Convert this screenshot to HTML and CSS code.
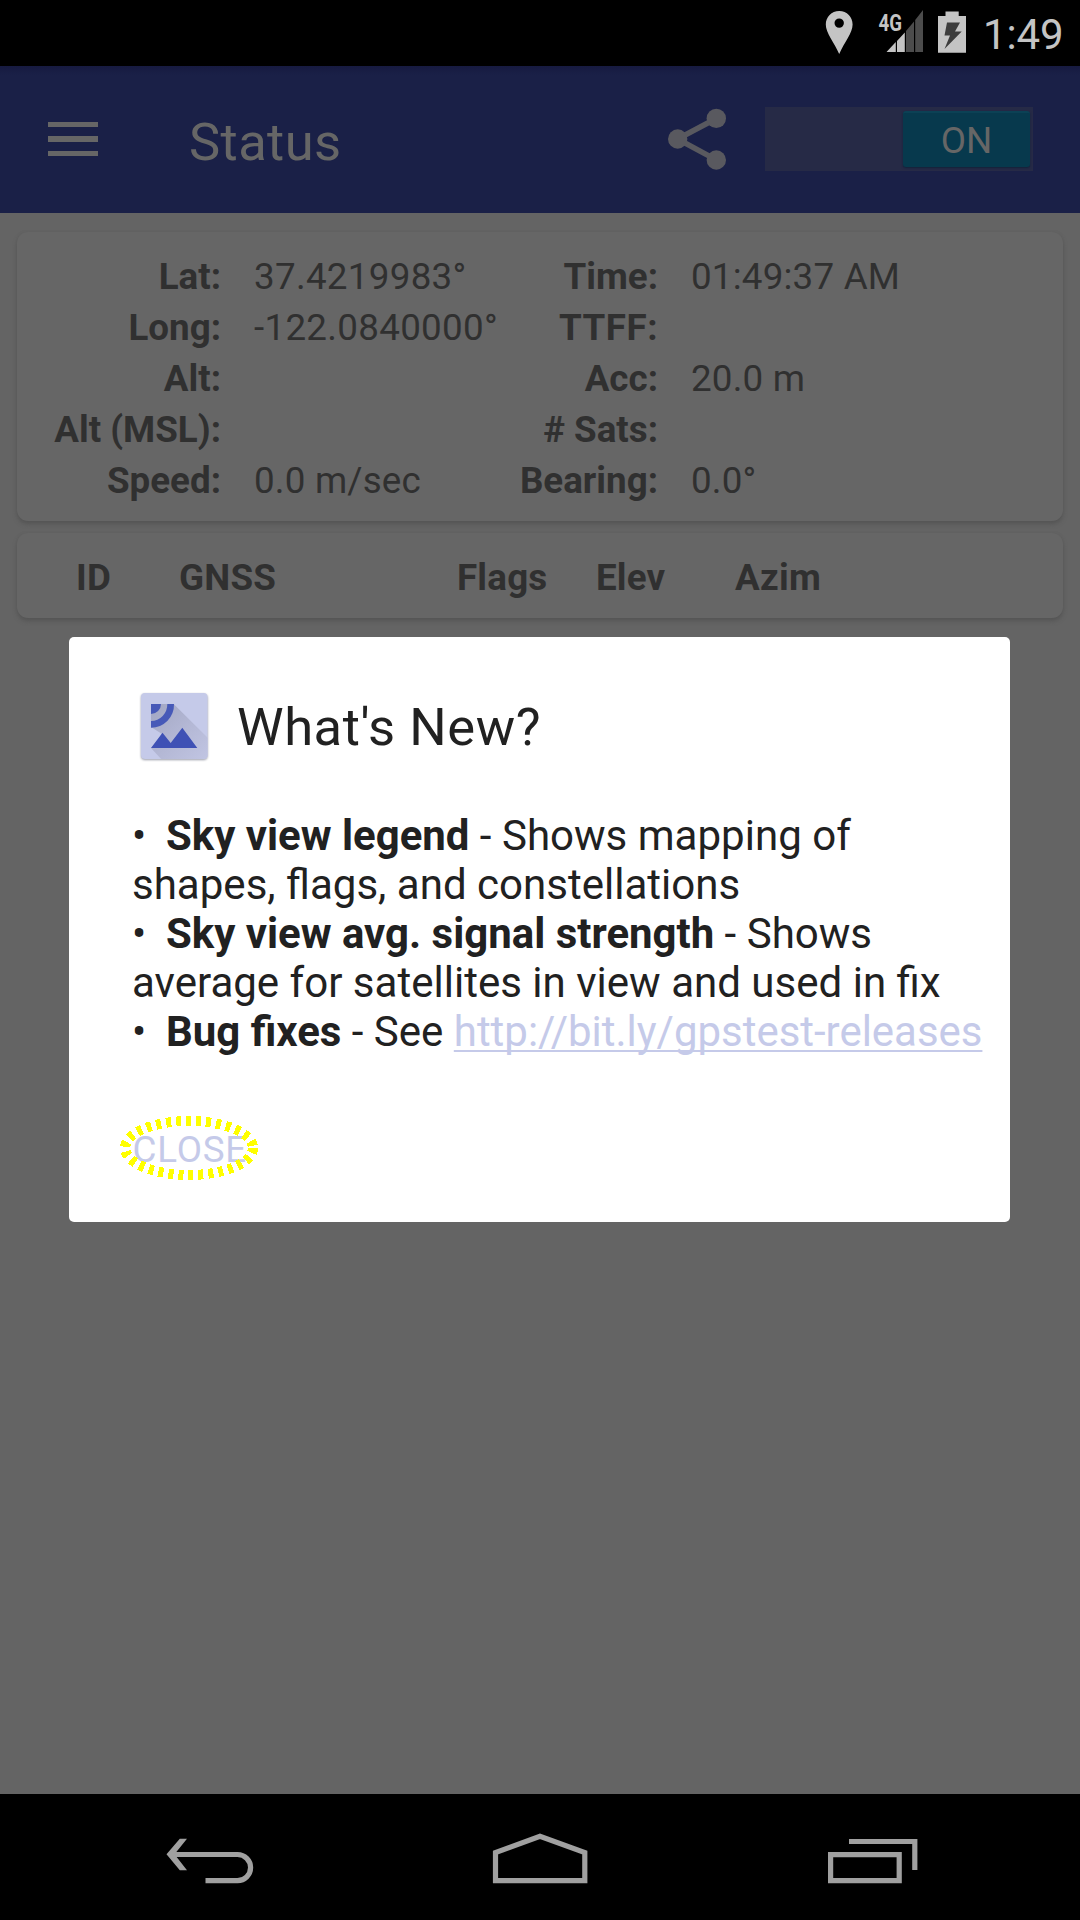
FILE: index.html
```html
<!DOCTYPE html>
<html lang="en">
<head>
<meta charset="utf-8">
<title>GPSTest</title>
<link rel="stylesheet" href="styles.css">
</head>
<body>
<div class="screen">
  <div class="statusbar">
    <svg class="status-icons" width="170" height="66" viewBox="810 0 170 66">
      <path fill="#c4c4c4" fill-rule="evenodd" d="M839.2 11C831.5 11 825.8 17 825.8 24.5C825.8 33 834 42 839.2 54C844.4 42 852.6 33 852.6 24.5C852.6 17 847 11 839.2 11ZM839.2 18.4A4.7 4.7 0 1 1 839.2 27.800A4.700 4.700 0 1 1 839.200 18.400Z"/>
      <path fill="#c4c4c4" d="M886.500 52L895.800 42V52ZM897 41L904.800 32.500V52H897Z"/>
      <path fill="#4c4c4c" d="M906 31L914 21.500V52H906ZM915.200 20L923 10V52H915.200Z"/>
      <text class="network" x="878.500" y="31" textLength="23.500" lengthAdjust="spacingAndGlyphs">4G</text>
      <path fill="#c4c4c4" d="M945.500 11.500H958.700V16H966V52.700H938V16H945.500Z"/>
      <path fill="#3c3c3c" d="M947 22.500H960L955 31.500H961.700L944.500 49L950 35.500H944.500Z"/>
    </svg>
    <span class="clock">1:49</span>
  </div>

  <header class="toolbar">
    <div class="menu"><i></i><i></i><i></i></div>
    <h1 class="title">Status</h1>
    <svg class="share" width="60" height="66" viewBox="666 106 60 66" fill="#59595f">
      <path d="M716.300 118.500L677.500 139L716.300 159.800" fill="none" stroke="#59595f" stroke-width="5.500"/>
      <circle cx="677.700" cy="139" r="9.700"/><circle cx="716.300" cy="118.400" r="9.700"/><circle cx="716.300" cy="160" r="9.700"/>
    </svg>
    <div class="switch"><span class="thumb">ON</span></div>
  </header>

  <main class="content">
    <section class="card info">
      <b>Lat:</b><span class="num">37.4219983°</span><b>Time:</b><span>01:49:37 AM</span>
      <b>Long:</b><span class="num">-122.0840000°</span><b class="ttff">TTFF:</b><span></span>
      <b>Alt:</b><span></span><b>Acc:</b><span>20.0 m</span>
      <b>Alt (MSL):</b><span></span><b># Sats:</b><span></span>
      <b>Speed:</b><span>0.0 m/sec</span><b>Bearing:</b><span>0.0°</span>
    </section>
    <section class="card sats">
      <b>ID</b><b>GNSS</b><b>Flags</b><b>Elev</b><b>Azim</b>
    </section>
  </main>

  <nav class="navbar">
    <svg width="1080" height="126" viewBox="0 1794 1080 126" fill="none" stroke="#a0a0a0" stroke-width="5.200">
      <path d="M172 1854.500H237.500A13.100 13.100 0 0 1 237.500 1880.700H205.500"/>
      <path fill="#a0a0a0" stroke="none" d="M166.500 1854.300L179.800 1838.800H187L174.500 1854.300L187 1870.200H179.800Z"/>
      <path d="M495.500 1880.700V1852.500L540 1836.300L584.800 1852.500V1880.700Z"/>
      <path d="M830.600 1854.600H899.200V1880.700H830.600ZM849 1841.500H914.800V1870"/>
    </svg>
  </nav>

  <div class="dialog">
    <div class="dialog-head">
      <svg class="app-icon" width="74" height="74" viewBox="137 689 74 74">
        <defs>
          <linearGradient id="cast" x1="0" y1="0" x2="1" y2="1">
            <stop offset="0" stop-color="#a2a6c2"/><stop offset="0.500" stop-color="#b3b7d4"/><stop offset="1" stop-color="#c1c5e3"/>
          </linearGradient>
          <clipPath id="tile"><rect x="141" y="693" width="66.500" height="66" rx="4"/></clipPath>
        </defs>
        <rect class="tile" x="141" y="693" width="66.500" height="66" rx="4" fill="#c5cae9"/>
        <path clip-path="url(#tile)" fill="url(#cast)" d="M161 704L173.700 704L208 738V760H162L151 748L162 734L151 727V714Z"/>
        <path fill="#4759b8" d="M151 704H161A10 10 0 0 1 151 714ZM167.300 704H174A23 23 0 0 1 151 727.800V721A16.500 16.500 0 0 0 167.300 704Z"/>
        <path fill="#3f51b5" d="M151 748L162.500 732.800L170.700 743L182.300 727.700L197.300 748Z"/>
      </svg>
      <h2>What's New?</h2>
    </div>
    <div class="notes">
      <p><i class="dot">•</i><b>Sky view legend</b> - Shows mapping of</p>
      <p>shapes, flags, and constellations</p>
      <p><i class="dot">•</i><b>Sky view avg. signal strength</b> - Shows</p>
      <p>average for satellites in view and used in fix</p>
      <p><i class="dot">•</i><b>Bug fixes</b> - See <a>http://bit.ly/gpstest-releases</a></p>
    </div>
    <div class="close">CLOSE
      <svg class="focus" width="140" height="66" viewBox="0 0 140 66"><ellipse cx="70" cy="33" rx="64" ry="27"/></svg>
    </div>
  </div>
</div>
</body>
</html>
```
FILE: styles.css
```css
* { box-sizing: border-box; margin: 0; padding: 0; }
body { width: 1080px; height: 1920px; font-family: Roboto, "Liberation Sans", sans-serif; background: #000; }
i { font-style: normal; }
svg { display: block; }
.screen { position: relative; width: 1080px; height: 1920px; display: flex; flex-direction: column; overflow: hidden; }

.statusbar { height: 66px; background: #000; display: flex; justify-content: flex-end; padding-right: 16px; }
.status-icons { margin-right: 3px; }
.network { font-size: 24px; font-weight: 700; fill: #c4c4c4; }
.clock { width: 81px; font-size: 42px; line-height: 70px; color: #c4c4c4; letter-spacing: -0.1px; white-space: nowrap; }

.toolbar { height: 147px; background: linear-gradient(#161a40, #1a2047 9px); display: flex; align-items: flex-start; padding-left: 48px; }
.menu { width: 50px; margin-top: 56px; display: grid; gap: 9px; }
.menu i { height: 5.300px; background: #666; }
.title { width: 477px; padding-left: 91px; margin-top: 45px; font-size: 52.500px; line-height: 62px; font-weight: 400; letter-spacing: 0.4px; color: #666; }
.share { margin: 40px 0 0 91px; }
.switch { width: 268px; height: 64px; margin: 41px 0 0 39px; padding: 4px 3px 4px 0; background: #262a46; display: flex; justify-content: flex-end; }
.thumb { width: 127px; height: 56px; border-radius: 3px; background: #07394d; border-top: 2px solid #0b4155; box-shadow: 0 1px 2px #11213a; color: #666; font-size: 36.750px; line-height: 56px; text-align: center; }

.content { flex: 1; background: #646464; padding: 19px 17px 0; display: flex; flex-direction: column; gap: 12px; color: #303030; font-size: 36.750px; }
.card { background: #666; border-radius: 11px; box-shadow: 0 3px 4px #555, 0 0 2px #606060; }
.info { height: 289px; padding-top: 19px; display: grid; grid-template-columns: 204px 202px 235px 1fr; grid-auto-rows: 51px; line-height: 51px; white-space: nowrap; }
.info b { text-align: right; }
.info .ttff { letter-spacing: 0.500px; }
.info span { padding-left: 33px; letter-spacing: 0.200px; }
.info .num { letter-spacing: 0.300px; }
.sats { height: 85px; padding-left: 59px; display: grid; grid-template-columns: 103px 278px 139px 139px 1fr; line-height: 89px; letter-spacing: 0.200px; }

.navbar { height: 126px; background: #000; }

.dialog { position: absolute; left: 69px; top: 637px; width: 941px; height: 585px; border-radius: 5px; background: #fff; color: #212121; padding: 52px 0 0 63px; }
.dialog-head { display: flex; gap: 26px; padding-left: 5px; height: 122px; }
.tile { filter: drop-shadow(0 1px 1px #999ba8); }
.dialog h2 { font-size: 52.500px; font-weight: 400; line-height: 76px; letter-spacing: 0.550px; white-space: nowrap; }
.notes { font-size: 42.050px; line-height: 49px; white-space: nowrap; }
.dot { display: inline-block; width: 34px; }
.notes a { color: #c5cae9; text-decoration: underline; text-decoration-thickness: 2px; text-underline-offset: 4px; text-decoration-skip-ink: none; }
.notes a, .notes b { font-size: 41.950px; }
.close { position: relative; width: 115px; margin-top: 72px; font-size: 36.750px; line-height: 44px; letter-spacing: 0.800px; text-indent: 0.500px; color: #c5cae9; }
.focus { position: absolute; left: -13px; top: -13px; }
.focus ellipse { fill: none; stroke: #ff0; stroke-width: 10; stroke-dasharray: 5 5; shape-rendering: crispEdges; }
```
